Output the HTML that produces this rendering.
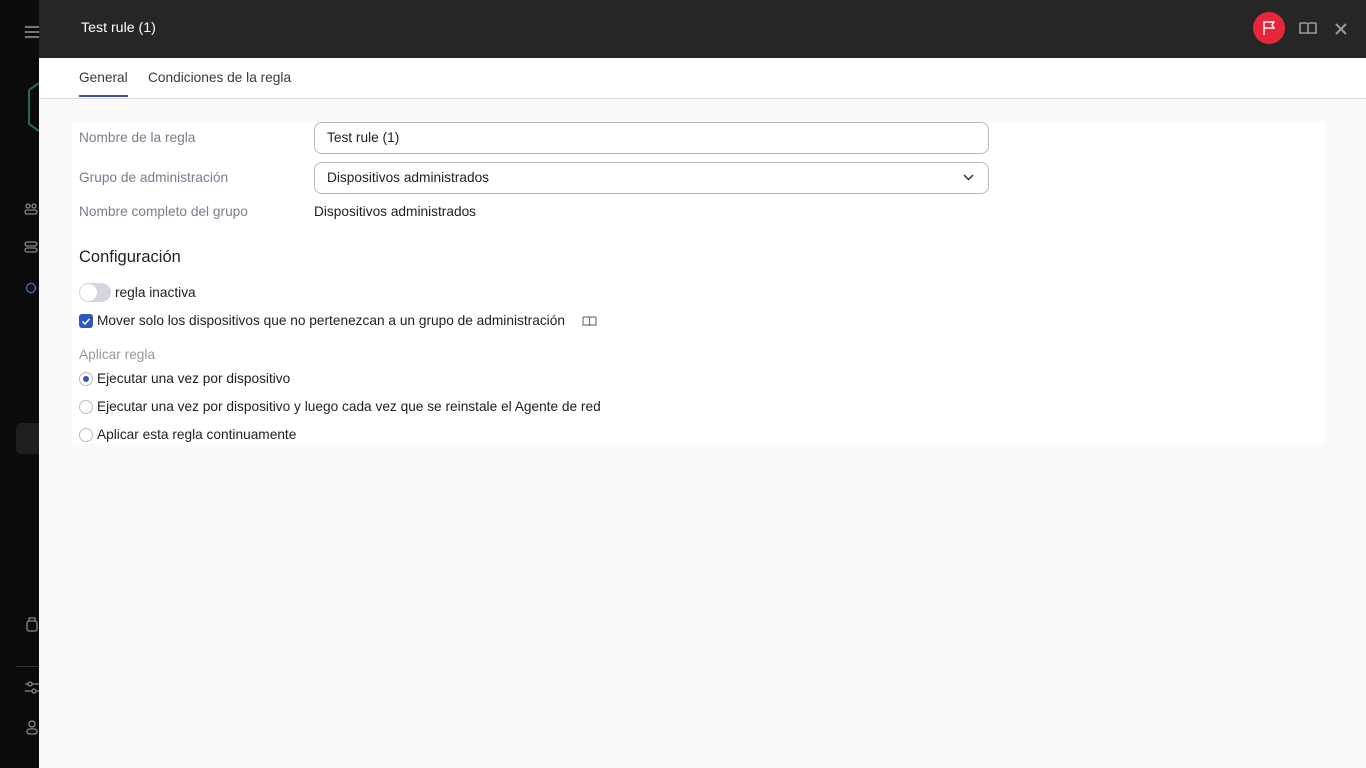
<!DOCTYPE html>
<html><head><meta charset="utf-8"><style>
*{box-sizing:border-box;margin:0;padding:0}
body{width:1366px;height:768px;overflow:hidden;background:#0b0b0b;font-family:"Liberation Sans",sans-serif;position:relative;font-size:13.7px;color:#1f1f1f}
.side{position:absolute;left:0;top:0;width:39px;height:768px;background:#0b0b0b}
.panel{position:absolute;left:39px;top:0;width:1327px;height:768px;background:#fafafa}
.hdr{height:58px;background:#262626;position:relative}
.hdr .t{position:absolute;left:42px;top:20px;color:#fff;font-size:14.2px}
.tabs{height:41px;background:#fff;border-bottom:1px solid #ddd;position:relative}
.tab{position:absolute;top:12px;font-size:13.7px;color:#3a3a3a}
.card{position:absolute;left:33px;top:122px;width:1254px;height:322px;background:#fff}
.lbl{position:absolute;left:40px;color:#7a7d8c;font-size:13.7px}
.inp{position:absolute;left:275px;width:675px;height:32px;border:1px solid #b8b8c0;border-radius:8px;padding:7px 12px;font-size:13.7px;background:#fff}
.txt{position:absolute;font-size:13.7px}
</style></head><body>
<div class="side">
<div style="position:absolute;left:25px;top:26px;width:14px;height:2px;background:#777;box-shadow:0 5px 0 #777,0 10px 0 #777"></div>
<svg style="position:absolute;left:26px;top:82px" width="13" height="50" fill="none" stroke="#1d6b5a" stroke-width="2"><path d="M13 1L3 8v34l10 7"/></svg>
<div style="position:absolute;left:16px;top:423px;width:23px;height:31px;background:#1e1e1e;border-radius:5px 0 0 5px"></div>
<div style="position:absolute;left:16px;top:666px;width:23px;height:1px;background:#333"></div>
<svg style="position:absolute;left:24px;top:200px" width="15" height="110" fill="none" stroke="#888" stroke-width="1.3"><circle cx="4" cy="6" r="2"/><circle cx="10" cy="6" r="2"/><rect x="1" y="10" width="12" height="4" rx="2"/><rect x="1" y="42" width="12" height="4" rx="2"/><rect x="1" y="48" width="12" height="4" rx="2"/><circle cx="7" cy="88" r="4.5" stroke="#4a6fd0"/></svg>
<svg style="position:absolute;left:24px;top:616px" width="15" height="120" fill="none" stroke="#888" stroke-width="1.3"><rect x="3" y="5" width="10" height="10" rx="2"/><path d="M5 5V2h6v3"/><path d="M1 68h14M1 75h14"/><circle cx="6" cy="68" r="2" fill="#0b0b0b"/><circle cx="10" cy="75" r="2" fill="#0b0b0b"/><circle cx="8" cy="108" r="3"/><rect x="3" y="113" width="10" height="5" rx="2.5"/></svg>
</div>
<div class="panel">
<div class="hdr"><div class="t">Test rule (1)</div>
<div style="position:absolute;left:1214px;top:12px;width:32px;height:32px;border-radius:50%;background:#e8263b"></div>
<svg style="position:absolute;left:1214px;top:12px" width="32" height="32" fill="none" stroke="#fff" stroke-width="1.4"><path d="M11 23V10h10l-2 3 2 3H11"/></svg>
<svg style="position:absolute;left:1260px;top:20px" width="18" height="16" fill="none" stroke="#999" stroke-width="1.6"><path d="M1 3h6a2 2 0 0 1 2 2v9M17 3h-6a2 2 0 0 0-2 2M1 3v10h16V3"/></svg>
<svg style="position:absolute;left:1295px;top:22px" width="14" height="14" stroke="#999" stroke-width="2"><path d="M2 2l10 10M12 2L2 12"/></svg>
</div>
<div class="tabs">
<div class="tab" style="left:40px">General</div>
<div style="position:absolute;left:40px;top:37px;width:49px;height:2px;background:#3a4fc0"></div>
<div class="tab" style="left:109px">Condiciones de la regla</div>
</div>
<div class="card"></div>
<div class="lbl" style="top:130px">Nombre de la regla</div>
<div class="inp" style="top:122px">Test rule (1)</div>
<div class="lbl" style="top:170px">Grupo de administración</div>
<div class="inp" style="top:162px">Dispositivos administrados
<svg style="position:absolute;right:14px;top:11px" width="11" height="8" fill="none" stroke="#333" stroke-width="1.5"><path d="M1 1l4.5 4.5L10 1"/></svg></div>
<div class="lbl" style="top:204px">Nombre completo del grupo</div>
<div class="txt" style="left:275px;top:204px">Dispositivos administrados</div>
<div class="txt" style="left:40px;top:248px;font-size:16.5px">Configuración</div>
<div style="position:absolute;left:40px;top:283px;width:32px;height:19px;border-radius:10px;background:#d4d5de"></div>
<div style="position:absolute;left:41px;top:284px;width:17px;height:17px;border-radius:50%;background:#fff"></div>
<div class="txt" style="left:76px;top:285px">regla inactiva</div>
<div style="position:absolute;left:40px;top:314px;width:14px;height:14px;border-radius:3px;background:#2f55c4"></div>
<svg style="position:absolute;left:40px;top:314px" width="14" height="14" fill="none" stroke="#fff" stroke-width="1.6"><path d="M3.5 7.5l2.5 2.5 4.5-5"/></svg>
<div class="txt" style="left:58px;top:313px">Mover solo los dispositivos que no pertenezcan a un grupo de administración</div>
<svg style="position:absolute;left:543px;top:315px" width="15" height="12" fill="none" stroke="#777" stroke-width="1.2"><path d="M1 2h5a1.5 1.5 0 0 1 1.5 1.5V11M14 2H9a1.5 1.5 0 0 0-1.5 1.5M1 2v8h13V2"/></svg>
<div class="lbl" style="top:347px;color:#999">Aplicar regla</div>
<div style="position:absolute;left:40px;top:372px;width:14px;height:14px;border-radius:50%;border:1px solid #bbb;background:#fff"></div>
<div style="position:absolute;left:44px;top:376px;width:6px;height:6px;border-radius:50%;background:#2f55c4"></div>
<div class="txt" style="left:58px;top:371px">Ejecutar una vez por dispositivo</div>
<div style="position:absolute;left:40px;top:400px;width:14px;height:14px;border-radius:50%;border:1px solid #bbb;background:#fff"></div>
<div class="txt" style="left:58px;top:399px">Ejecutar una vez por dispositivo y luego cada vez que se reinstale el Agente de red</div>
<div style="position:absolute;left:40px;top:428px;width:14px;height:14px;border-radius:50%;border:1px solid #bbb;background:#fff"></div>
<div class="txt" style="left:58px;top:427px">Aplicar esta regla continuamente</div>
</div>
</body></html>
